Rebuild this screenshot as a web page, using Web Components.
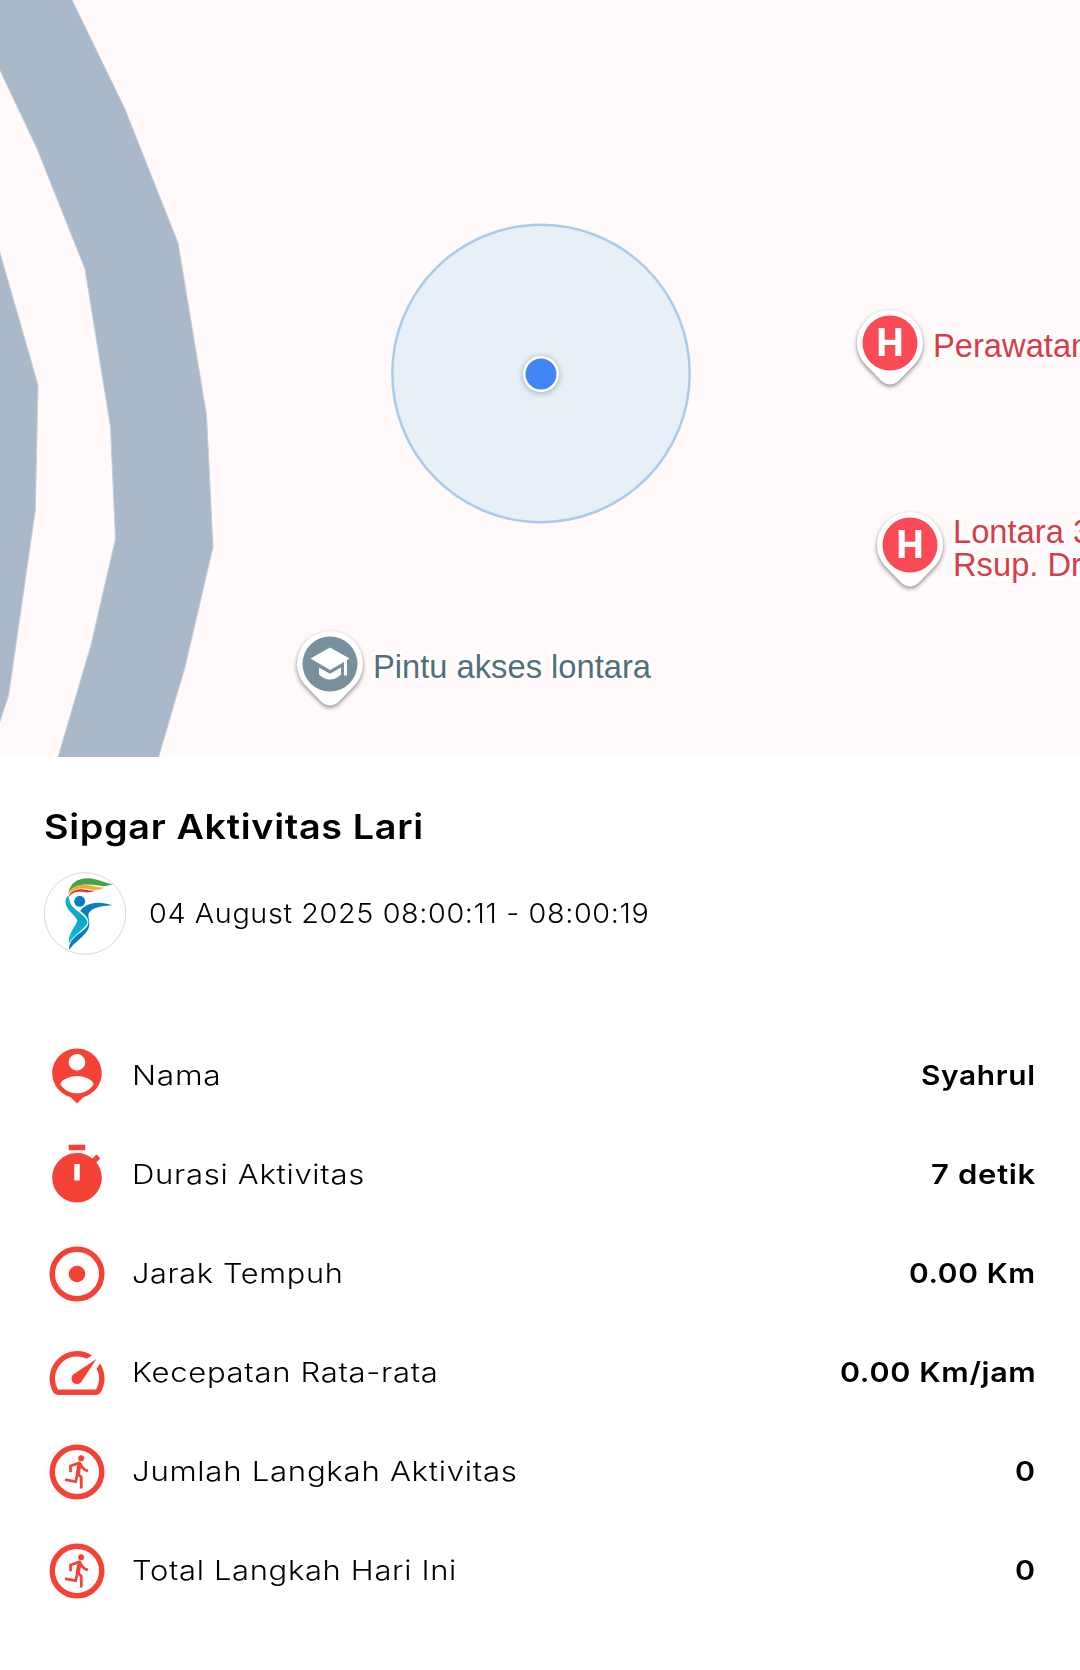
<!DOCTYPE html>
<html lang="id">
<head>
<meta charset="utf-8">
<title>Sipgar Aktivitas Lari</title>
<style>
  body {
    margin: 0;
    background: #fff;
    color: #000;
    font-family: Inter, "Open Sans", sans-serif;
  }
</style>
</head>
<body>
<activity-page></activity-page>

<script>
// one line of text, stretched to the given width
class FitText extends HTMLElement {
  constructor() {
    super();
    this.attachShadow({ mode: 'open' });
  }
  connectedCallback() {
    this.shadowRoot.innerHTML = /*html*/`
      <style>
        :host { display: block; white-space: nowrap; letter-spacing: .6px; }
        span { display: inline-block; transform-origin: left center; }
        :host([end]) span { transform-origin: right center; }
      </style>
      <span><slot></slot></span>
    `;
    const span = this.shadowRoot.querySelector('span');
    const width = Number(this.getAttribute('width'));
    if (width) {
      span.style.transform = `scaleX(${width / span.offsetWidth})`;
    }
  }
}
customElements.define('fit-text', FitText);

class MapPin extends HTMLElement {
  constructor() {
    super();
    this.attachShadow({ mode: 'open' });
  }
  connectedCallback() {
    const school = this.getAttribute('kind') === 'school';
    const glyph = school
      ? '<path fill="#fff" d="M20.500 33.500L40 22.500L59.500 33.500L57 35V50.500H54V37L40 45Z"/><path fill="#fff" d="M29 42.500L40 48.800L51 42.500V49.500Q46 54.500 40 54.500Q34 54.500 29 49.500Z"/>'
      : '<path fill="#fff" d="M28.700 24H34.700V35.700H45.300V24H51.300V52H45.300V41H34.700V52H28.700Z"/>';
    this.shadowRoot.innerHTML = /*html*/`
      <style>
        :host { display: block; width: 80px; height: 92px; }
        svg { display: block; filter: drop-shadow(0 2px 2px rgba(0, 0, 0, .45)); }
      </style>
      <svg width="80" height="92" viewBox="0 0 80 92">
        <path fill="#fff" d="M40 6A33 33 0 0 0 7 39C7 48 11 56 17 62L31 76.500Q40 84.500 49 76.500L63 62C69 56 73 48 73 39A33 33 0 0 0 40 6Z"/>
        <circle cx="40" cy="39" r="27.500" fill="${school ? '#78909c' : '#f94a56'}"/>
        ${glyph}
      </svg>
    `;
  }
}
customElements.define('map-pin', MapPin);

class MapPlace extends HTMLElement {
  constructor() {
    super();
    this.attachShadow({ mode: 'open' });
  }
  connectedCallback() {
    const school = this.getAttribute('kind') === 'school';
    this.shadowRoot.innerHTML = /*html*/`
      <style>
        :host {
          position: absolute;
          display: flex;
          align-items: center;
          gap: 3px;
          width: max-content;
          color: ${school ? '#546e7a' : '#d93c48'};
          font: 32.7px/33px "Liberation Sans", Arial, sans-serif;
        }
        .label {
          padding-bottom: 9px;
          white-space: nowrap;
          -webkit-text-stroke: 6px #fff;
          paint-order: stroke fill;
        }
      </style>
      <map-pin kind="${this.getAttribute('kind')}"></map-pin>
      <div class="label"><slot></slot></div>
    `;
  }
}
customElements.define('map-place', MapPlace);

class ActivityMap extends HTMLElement {
  constructor() {
    super();
    this.attachShadow({ mode: 'open' });
  }
  connectedCallback() {
    this.shadowRoot.innerHTML = /*html*/`
      <style>
        :host {
          display: block;
          position: relative;
          height: 757px;
          overflow: hidden;
          background: #fff9f9;
        }
        .roads { display: block; }
        #perawatan { left: 850px; top: 304px; }
        #lontara { left: 870px; top: 506px; }
        #pintu { left: 290px; top: 625px; }
      </style>
      <svg class="roads" width="1080" height="757" viewBox="0 0 1080 757">
        <g fill="#a9b9ca" stroke="#c3ced9" stroke-width="1">
          <path d="M-2 -2H71L124.500 108L178 243L206.500 415L213 547L185 667L158 759H57.500L91 645L115.500 539L110.500 427L85 269L37 148.500L-2 66Z"/>
          <path d="M-2 246L38 385L35.300 510L8.500 696L-2 727Z"/>
        </g>
        <circle cx="541" cy="373.500" r="148.700" fill="#e7eff7" stroke="#abcbea" stroke-width="2.500"/>
        <circle cx="541" cy="374" r="18" fill="#fff" style="filter: drop-shadow(0 1px 3px rgba(0,0,0,.3))"/>
        <circle cx="541" cy="374" r="15.500" fill="#4285f4"/>
      </svg>
      <map-place id="perawatan" kind="hospital">Perawatan</map-place>
      <map-place id="lontara" kind="hospital">Lontara 3<br>Rsup. Dr.</map-place>
      <map-place id="pintu" kind="school">Pintu akses lontara</map-place>
    `;
  }
}
customElements.define('activity-map', ActivityMap);

class SipgarLogo extends HTMLElement {
  constructor() {
    super();
    this.attachShadow({ mode: 'open' });
  }
  connectedCallback() {
    this.shadowRoot.innerHTML = /*html*/`
      <style>
        :host { display: block; width: 82px; height: 83px; }
        svg { display: block; }
      </style>
      <svg width="82" height="83" viewBox="42 36 246 249">
        <defs>
          <linearGradient id="body" x1="0" y1="0" x2="0" y2="1">
            <stop offset="0" stop-color="#12b5c9"/>
            <stop offset=".5" stop-color="#0fa3cc"/>
            <stop offset="1" stop-color="#10c0d0"/>
          </linearGradient>
        </defs>
        <circle cx="165" cy="160.500" r="122.500" fill="#fff" stroke="#c4c4c4" stroke-width="2"/>
        <path fill="#43a447" d="M115 99Q124 55 175 55C202 56 225 70 249 73Q225 82 200 76C170 70 130 72 115 99Z"/>
        <path fill="#f2ac2e" d="M114 106C121 77 150 71 178 76C195 79 205 83 222 83Q205 93 185 89C155 83 130 84 114 106Z"/>
        <path fill="#db3832" d="M115 113C121 90 145 85 165 89C175 91 185 92 195 92Q180 100 160 96C140 93 125 97 115 113Z"/>
        <circle cx="149" cy="124" r="16.500" fill="#0a7fc0"/>
        <path fill="url(#body)" d="M114 107C104 115 105 132 111 141C119 157 137 168 142 181C138 200 112 222 117 251C130 223 168 207 173 187C166 162 130 151 121 130C118 120 118 113 114 107Z"/>
        <path fill="#0b7cbd" d="M150 153C170 127 205 122 248 136C215 138 187 142 176 160C173 172 179 180 178 195C176 225 130 245 118 271C115 252 125 240 135 229C155 211 177 204 174 183C171 168 158 160 150 153Z"/>
        <path fill="none" stroke="#fff" stroke-width="2" d="M150 153C158 160 171 168 174 183C177 204 155 211 135 229C125 240 119 246 117 256"/>
      </svg>
    `;
  }
}
customElements.define('sipgar-logo', SipgarLogo);

const runner = /*html*/`
  <circle cx="12" cy="12" r="9" fill="none" stroke="currentColor" stroke-width="2"/>
  <circle cx="13.500" cy="7" r="1.080"/>
  <g fill="none" stroke="currentColor" stroke-width="1">
    <path d="M9.650 12.100V9.800L12.900 8.700L13.900 10.300Q14.700 11.350 16 11.600"/>
    <path d="M12.300 12.600L13.550 13.900V18"/>
    <path d="M7.650 14.800L11.500 15.550L12.400 11.600"/>
    <path stroke-width="1.500" d="M12.950 8.900L12.250 12.900"/>
  </g>`;

const icons = {
  person: '<path d="M12 2c-4.970 0-9 4.030-9 9 0 4.170 2.840 7.670 6.690 8.690L12 22l2.310-2.310C18.160 18.670 21 15.170 21 11c0-4.970-4.030-9-9-9zm0 2c1.660 0 3 1.340 3 3s-1.340 3-3 3-3-1.340-3-3 1.340-3 3-3zm0 14.300c-2.500 0-4.710-1.280-6-3.220.030-1.990 4-3.080 6-3.080 1.990 0 5.970 1.090 6 3.080-1.290 1.940-3.500 3.220-6 3.220z"/>',
  timer: '<path fill-rule="evenodd" d="M15 1H9v2h6V1zm-4 13h2V8h-2v6zm8.030-6.610l1.420-1.420c-.430-.510-.900-.990-1.410-1.410l-1.420 1.420C16.070 4.740 14.120 4 12 4c-4.970 0-9 4.030-9 9s4.020 9 9 9 9-4.030 9-9c0-2.120-.740-4.070-1.970-5.610z"/>',
  target: '<circle cx="12" cy="12" r="9" fill="none" stroke="currentColor" stroke-width="2"/><circle cx="12" cy="12" r="3"/>',
  speed: '<path d="M20.380 8.570l-1.230 1.850a8 8 0 0 1-.220 7.580H5.070A8 8 0 0 1 15.580 6.850l1.850-1.230A10 10 0 0 0 3.350 19a2 2 0 0 0 1.720 1h13.850a2 2 0 0 0 1.740-1 10 10 0 0 0-.270-10.440zm-9.790 6.840a2 2 0 0 0 2.830 0l5.660-8.490-8.490 5.660a2 2 0 0 0 0 2.830z"/>',
  run: runner
};

class StatRow extends HTMLElement {
  constructor() {
    super();
    this.attachShadow({ mode: 'open' });
  }
  connectedCallback() {
    this.shadowRoot.innerHTML = /*html*/`
      <style>
        :host {
          display: flex;
          align-items: center;
          height: 66px;
          font-size: 27.5px;
          line-height: 34px;
        }
        svg { flex: none; margin-right: 22px; color: #f44336; fill: #f44336; }
        fit-text { padding-bottom: 2px; }
        .label { flex: 1; font-weight: 300; }
        .value { font-weight: 570; }
      </style>
      <svg width="66" height="66" viewBox="0 0 24 24">${icons[this.getAttribute('icon')]}</svg>
      <fit-text class="label" width="${this.getAttribute('label-width')}"><slot></slot></fit-text>
      <fit-text class="value" end width="${this.getAttribute('value-width')}">${this.getAttribute('value')}</fit-text>
    `;
    // slotted text is measured on the row, so fit again once it is in place
    this.shadowRoot.querySelector('.label').connectedCallback();
  }
}
customElements.define('stat-row', StatRow);

class ActivityPage extends HTMLElement {
  constructor() {
    super();
    this.attachShadow({ mode: 'open' });
  }
  connectedCallback() {
    this.shadowRoot.innerHTML = /*html*/`
      <style>
        :host { display: block; width: 1080px; height: 1670px; overflow: hidden; }
        section { padding: 48px 44px 0; }
        .title { font-size: 34.5px; font-weight: 570; line-height: 44px; }
        .date {
          display: flex;
          align-items: center;
          gap: 23px;
          margin-top: 23px;
          font-size: 27.5px;
          line-height: 34px;
        }
        .date fit-text { padding-bottom: 2px; font-weight: 300; }
        .stats { display: grid; gap: 33px; margin-top: 88px; }
      </style>
      <activity-map></activity-map>
      <section>
        <fit-text class="title" width="380">Sipgar Aktivitas Lari</fit-text>
        <div class="date">
          <sipgar-logo></sipgar-logo>
          <fit-text width="500">04 August 2025 08:00:11 - 08:00:19</fit-text>
        </div>
        <div class="stats">
          <stat-row icon="person" label-width="90" value="Syahrul" value-width="115">Nama</stat-row>
          <stat-row icon="timer" label-width="233" value="7 detik" value-width="105">Durasi Aktivitas</stat-row>
          <stat-row icon="target" label-width="211" value="0.00 Km" value-width="127">Jarak Tempuh</stat-row>
          <stat-row icon="speed" label-width="306" value="0.00 Km/jam" value-width="196">Kecepatan Rata-rata</stat-row>
          <stat-row icon="run" label-width="386" value="0" value-width="21">Jumlah Langkah Aktivitas</stat-row>
          <stat-row icon="run" label-width="325" value="0" value-width="21">Total Langkah Hari Ini</stat-row>
        </div>
      </section>
    `;
  }
}
customElements.define('activity-page', ActivityPage);
</script>
</body>
</html>
